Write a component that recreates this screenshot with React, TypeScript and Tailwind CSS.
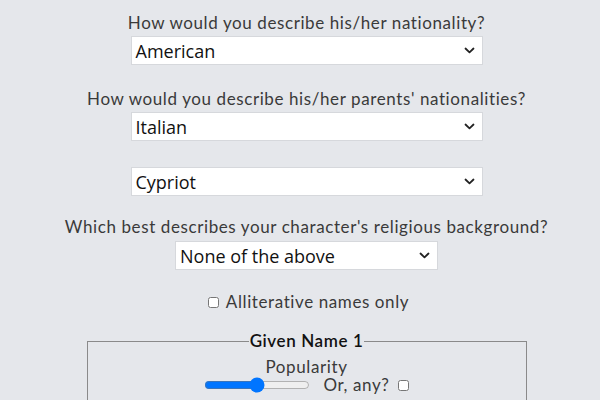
import React from "react";

const labelFont = { fontFamily: "Lato, 'Open Sans', sans-serif" } as const;

function Chevron() {
  return (
    <svg width="11" height="7" viewBox="0 0 11 7" className="shrink-0">
      <path d="M1.5 1.5 L5.5 5.3 L9.5 1.5" fill="none" stroke="#222" strokeWidth="1.8" strokeLinecap="round" strokeLinejoin="round" />
    </svg>
  );
}

function FakeSelect({ value, w }: { value: string; w: string }) {
  return (
    <div
      className={`${w} h-[29px] bg-white border border-[#d6d8dc] flex items-center justify-between pl-[4px] pr-[7px] text-[18px] leading-[24px] text-[#111] tracking-normal`}
      style={{ fontFamily: "'Open Sans', 'Noto Sans', sans-serif" }}
    >
      <span>{value}</span>
      <Chevron />
    </div>
  );
}

export default function App() {
  return (
    <div className="w-[600px] h-[400px] overflow-hidden bg-[#e5e7eb] text-[#3a3a3a] tracking-[0.6px]" style={labelFont}>
      <div className="flex flex-col items-center pl-[13px]">
        <div className="mt-[11px] h-[24px] leading-[24px] text-[17px]">How would you describe his/her nationality?</div>
        <div className="mt-[1px]"><FakeSelect value="American" w="w-[352px]" /></div>

        <div className="mt-[22px] h-[24px] leading-[24px] text-[17px]">How would you describe his/her parents' nationalities?</div>
        <div className="mt-[1px]"><FakeSelect value="Italian" w="w-[352px]" /></div>
        <div className="mt-[26px]"><FakeSelect value="Cypriot" w="w-[352px]" /></div>

        <div className="mt-[19px] h-[24px] leading-[24px] text-[17px]">Which best describes your character's religious background?</div>
        <div className="mt-[2px]"><FakeSelect value="None of the above" w="w-[263px]" /></div>

        <label className="mt-[20px] h-[24px] leading-[24px] flex items-center gap-[7px] text-[17px] ml-[4px]">
          <input type="checkbox" className="w-[11px] h-[11px]" />
          <span>Alliterative names only</span>
        </label>

        <fieldset className="mt-[17px] w-[440px] border border-[#8a8a8a] px-2 pb-6">
          <legend className="mx-auto px-[1px] text-[17px] font-semibold text-[#111] leading-[20px]">Given Name 1</legend>
          <div className="flex flex-col items-center">
            <div className="text-[17px] leading-[19px] mt-[6px]">Popularity</div>
            <div className="flex items-center h-[18px] leading-[18px]">
              <input type="range" className="w-[106px]" defaultValue={50} />
              <span className="ml-[13px] text-[17px]">Or, any?</span>
              <input type="checkbox" className="ml-[8px] w-[11px] h-[11px]" />
            </div>
          </div>
        </fieldset>
      </div>
    </div>
  );
}
